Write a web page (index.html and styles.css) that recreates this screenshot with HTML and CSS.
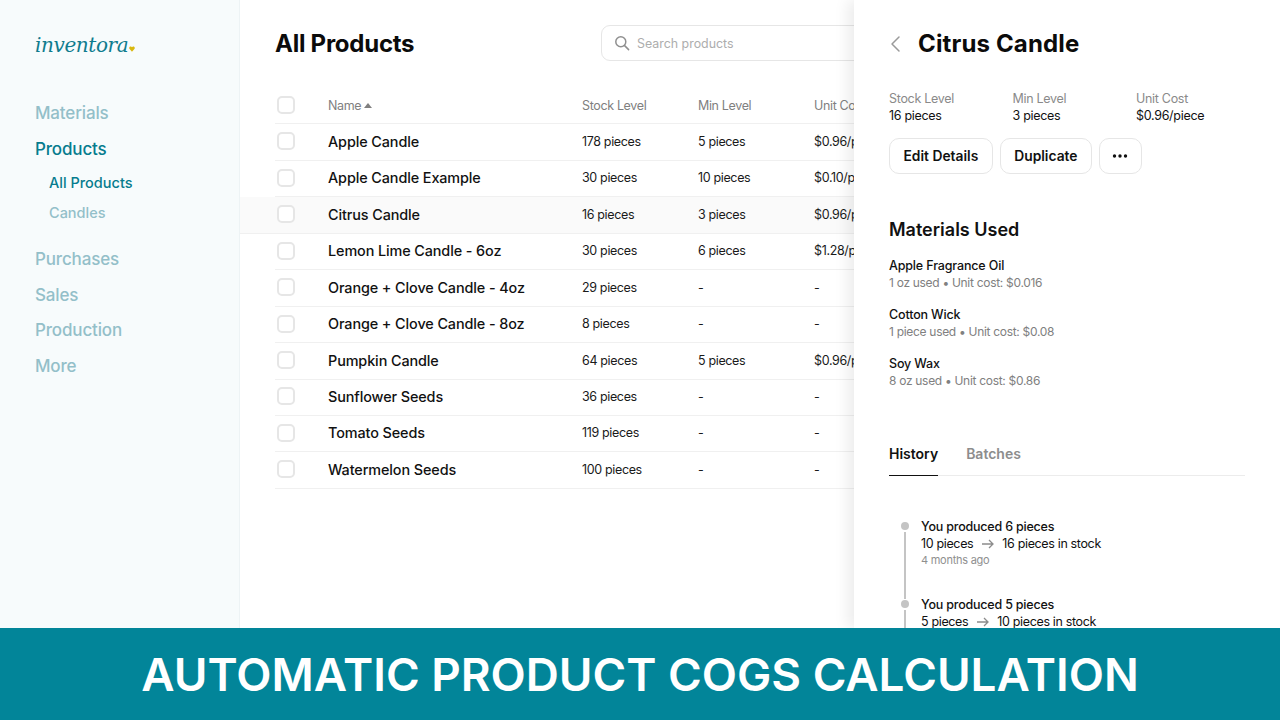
FILE: index.html
```html
<!DOCTYPE html>
<html lang="en">
<head>
<meta charset="utf-8">
<title>Inventora</title>
<link rel="stylesheet" href="styles.css">
</head>
<body>
<div class="app">
  <div class="workspace">
    <aside class="sidebar">
      <div class="logo"><span class="logo-text">inventora</span><svg class="logo-heart" viewBox="0 0 10 10" width="6" height="6"><path d="M5 9.500 1 5C-.5 3 .7.7 2.800.7 3.900.7 4.600 1.300 5 2c.4-.7 1.100-1.300 2.200-1.300C9.300.7 10.500 3 9 5Z" fill="#d9b80f"/></svg></div>
      <nav class="nav">
        <a class="nav-item">Materials</a>
        <a class="nav-item active">Products</a>
        <div class="subnav">
          <a class="sub-item active">All Products</a>
          <a class="sub-item">Candles</a>
        </div>
        <a class="nav-item">Purchases</a>
        <a class="nav-item">Sales</a>
        <a class="nav-item">Production</a>
        <a class="nav-item">More</a>
      </nav>
    </aside>
    <main class="main">
      <header class="main-head">
        <h1 class="page-title">All Products</h1>
        <div class="search">
          <svg class="search-icon" viewBox="0 0 16 16" width="16" height="16" fill="none" stroke="#8f8f8f" stroke-width="1.500" stroke-linecap="round"><circle cx="6.800" cy="6.800" r="5"/><path d="m10.600 10.600 4 4"/></svg>
          <span class="search-text">Search products</span>
        </div>
      </header>
      <div class="table">
        <div class="row head">
          <span class="check"></span><span class="cell-head">Name<i class="sort"></i></span><span class="cell-head">Stock Level</span><span class="cell-head">Min Level</span><span class="cell-head">Unit Cost</span>
        </div>
        <div class="row"><span class="check"></span><span class="name">Apple Candle</span><span class="cell">178 pieces</span><span class="cell">5 pieces</span><span class="cell">$0.96/piece</span></div>
        <div class="row"><span class="check"></span><span class="name">Apple Candle Example</span><span class="cell">30 pieces</span><span class="cell">10 pieces</span><span class="cell">$0.10/piece</span></div>
        <div class="row selected"><span class="check"></span><span class="name">Citrus Candle</span><span class="cell">16 pieces</span><span class="cell">3 pieces</span><span class="cell">$0.96/piece</span></div>
        <div class="row"><span class="check"></span><span class="name">Lemon Lime Candle - 6oz</span><span class="cell">30 pieces</span><span class="cell">6 pieces</span><span class="cell">$1.28/piece</span></div>
        <div class="row"><span class="check"></span><span class="name">Orange + Clove Candle - 4oz</span><span class="cell">29 pieces</span><span class="cell">-</span><span class="cell">-</span></div>
        <div class="row"><span class="check"></span><span class="name">Orange + Clove Candle - 8oz</span><span class="cell">8 pieces</span><span class="cell">-</span><span class="cell">-</span></div>
        <div class="row"><span class="check"></span><span class="name">Pumpkin Candle</span><span class="cell">64 pieces</span><span class="cell">5 pieces</span><span class="cell">$0.96/piece</span></div>
        <div class="row"><span class="check"></span><span class="name">Sunflower Seeds</span><span class="cell">36 pieces</span><span class="cell">-</span><span class="cell">-</span></div>
        <div class="row"><span class="check"></span><span class="name">Tomato Seeds</span><span class="cell">119 pieces</span><span class="cell">-</span><span class="cell">-</span></div>
        <div class="row"><span class="check"></span><span class="name">Watermelon Seeds</span><span class="cell">100 pieces</span><span class="cell">-</span><span class="cell">-</span></div>
      </div>
    </main>
    <section class="panel">
      <div class="panel-head">
        <svg class="back" viewBox="0 0 12 18" width="12" height="18" fill="none" stroke="#9a9a9a" stroke-width="1.500" stroke-linecap="round" stroke-linejoin="round"><path d="M10 2 3 9l7 7"/></svg>
        <h2 class="panel-title">Citrus Candle</h2>
      </div>
      <div class="stats">
        <div class="stat"><span class="stat-label">Stock Level</span><span class="stat-value">16 pieces</span></div>
        <div class="stat"><span class="stat-label">Min Level</span><span class="stat-value">3 pieces</span></div>
        <div class="stat"><span class="stat-label">Unit Cost</span><span class="stat-value">$0.96/piece</span></div>
      </div>
      <div class="actions">
        <button class="btn">Edit Details</button>
        <button class="btn">Duplicate</button>
        <button class="btn more"><svg viewBox="0 0 16 4" width="16" height="4" fill="#111"><circle cx="2.500" cy="2" r="1.700"/><circle cx="8" cy="2" r="1.700"/><circle cx="13.500" cy="2" r="1.700"/></svg></button>
      </div>
      <h3 class="section-title">Materials Used</h3>
      <div class="materials">
        <div class="material"><span class="material-name">Apple Fragrance Oil</span><span class="material-meta">1 oz used • Unit cost: $0.016</span></div>
        <div class="material"><span class="material-name">Cotton Wick</span><span class="material-meta">1 piece used • Unit cost: $0.08</span></div>
        <div class="material"><span class="material-name">Soy Wax</span><span class="material-meta">8 oz used • Unit cost: $0.86</span></div>
      </div>
      <div class="tabs">
        <span class="tab active">History</span>
        <span class="tab">Batches</span>
      </div>
      <div class="timeline">
        <div class="event">
          <span class="event-title">You produced 6 pieces</span>
          <span class="event-line"><span>10 pieces</span><svg class="arrow" viewBox="0 0 12 10" width="12" height="10" fill="none" stroke="#8c8c8c" stroke-width="1.300"><path d="M0 5h11M7 1l4 4-4 4"/></svg><span>16 pieces in stock</span></span>
          <span class="event-time">4 months ago</span>
        </div>
        <div class="event">
          <span class="event-title">You produced 5 pieces</span>
          <span class="event-line"><span>5 pieces</span><svg class="arrow" viewBox="0 0 12 10" width="12" height="10" fill="none" stroke="#8c8c8c" stroke-width="1.300"><path d="M0 5h11M7 1l4 4-4 4"/></svg><span>10 pieces in stock</span></span>
        </div>
      </div>
    </section>
  </div>
  <footer class="banner">AUTOMATIC PRODUCT COGS CALCULATION</footer>
</div>
</body>
</html>
```
FILE: styles.css
```css
* { box-sizing: border-box; }
html, body { margin: 0; padding: 0; }
body { font-family: "Inter", "Noto Sans", sans-serif; color: #111; background: #fff; }
h1, h2, h3 { margin: 0; }
.app { width: 1280px; height: 720px; display: flex; flex-direction: column; overflow: hidden; }
.workspace { position: relative; height: 628px; display: flex; overflow: hidden; }

.sidebar { width: 240px; flex: none; background: #f7fbfc; border-right: 1px solid #edf3f5; padding: 30px 0 0 35px; }
.logo { height: 28px; display: flex; align-items: flex-end; color: #0f7c8e; }
.logo-text { font-family: "DejaVu Serif", serif; font-style: italic; font-size: 20px; line-height: 26px; letter-spacing: -0.4px; }
.logo-heart { margin: 0 0 6px 1px; }
.nav { display: flex; flex-direction: column; margin-top: 43px; }
.nav-item { font-size: 17px; line-height: 24px; font-weight: 500; color: #93bfc9; margin-bottom: 11.600px; letter-spacing: -0.15px; }
.nav-item.active { color: #067c8e; }
.subnav { display: flex; flex-direction: column; padding-left: 14px; margin-top: 1px; margin-bottom: 24px; gap: 10px; }
.sub-item { font-size: 14.500px; line-height: 20px; font-weight: 500; color: #93bfc9; }
.sub-item.active { color: #067c8e; }

.main { flex: 1; padding-left: 35px; min-width: 0; }
.main-head { height: 88px; display: flex; align-items: flex-start; }
.page-title { font-size: 24px; font-weight: 700; line-height: 30px; margin-top: 29px; width: 326px; color: #0b0b0b; letter-spacing: -0.25px; }
.search { margin-top: 25px; width: 400px; height: 36px; border: 1px solid #e6e6e6; border-radius: 9px; display: flex; align-items: center; padding: 1px 0 0 12px; flex: none; }
.search-icon { flex: none; margin-top: -1px; }
.search-text { margin-left: 7px; font-size: 12.400px; color: #adadad; }

.table { width: 800px; }
.row { display: grid; grid-template-columns: 53px 254px 116px 116px 1fr; align-items: center; height: 36.450px; padding-bottom: 1.500px; border-bottom: 1px solid #f0f0f0; }
.row.head { padding-bottom: 0.500px; }
.row.selected { background: #fafafa; margin-left: -35px; padding-left: 35px; }
.check { width: 18px; height: 18px; margin-left: 2px; border: 2px solid #e6e6e6; border-radius: 5px; background: #fff; }
.cell-head { font-size: 12.500px; color: #808080; display: flex; align-items: center; letter-spacing: -0.35px; }
.sort { width: 0; height: 0; margin-left: 3px; border: 4.500px solid transparent; border-top: 0; border-bottom: 5px solid #808080; }
.name { font-size: 14.400px; font-weight: 500; color: #111; white-space: nowrap; letter-spacing: -0.1px; }
.cell { font-size: 12.500px; color: #1a1a1a; white-space: nowrap; letter-spacing: -0.35px; }

.panel { position: absolute; top: 0; right: 0; bottom: 0; width: 426px; background: #fff; box-shadow: -6px 0 14px rgba(0,0,0,.08); padding: 29px 35px 0; overflow: hidden; }
.panel-head { display: flex; align-items: center; height: 30px; }
.back { flex: none; }
.panel-title { margin-left: 17px; font-size: 24px; line-height: 30px; font-weight: 700; color: #0b0b0b; letter-spacing: 0.15px; }
.stats { display: grid; grid-template-columns: repeat(3, 123.500px); margin-top: 31px; }
.stat { display: flex; flex-direction: column; }
.stat-label { font-size: 12.500px; line-height: 17px; color: #8a8a8a; letter-spacing: -0.3px; }
.stat-value { font-size: 12.500px; line-height: 17px; color: #111; letter-spacing: -0.3px; }
.actions { display: flex; gap: 7px; margin-top: 14px; }
.btn { height: 36px; padding: 0 13.500px 1px; border: 1px solid #e6e6e6; border-radius: 10px; background: #fff; font: 600 13.800px "Inter", sans-serif; color: #111; display: flex; align-items: center; }
.btn.more { width: 43px; justify-content: center; padding: 0; }
.section-title { margin-top: 44px; font-size: 18px; line-height: 24px; font-weight: 600; color: #111; }
.materials { display: flex; flex-direction: column; gap: 14.800px; margin-top: 15px; }
.material { display: flex; flex-direction: column; }
.material-name { font-size: 12.500px; line-height: 17px; font-weight: 500; color: #111; letter-spacing: -0.15px; }
.material-meta { font-size: 12px; line-height: 17px; color: #808080; letter-spacing: -0.3px; }
.tabs { display: flex; gap: 28px; margin-top: 55.500px; border-bottom: 1px solid #ececec; width: 356px; }
.tab { font-size: 14px; line-height: 20px; font-weight: 600; color: #8d8d8d; padding-bottom: 11px; margin-bottom: -1px; }
.tab.active { color: #111; border-bottom: 1.500px solid #111; }
.timeline { margin-top: 42px; padding-left: 32px; }
.event { position: relative; display: flex; flex-direction: column; height: 78px; }
.event::before { content: ""; position: absolute; left: -20px; top: 4px; width: 8px; height: 8px; border-radius: 50%; background: #c4c4c4; }
.event::after { content: ""; position: absolute; left: -16.800px; top: 14px; width: 2px; bottom: -3px; background: #c4c4c4; }
.event-title { font-size: 12.500px; line-height: 17px; font-weight: 500; color: #111; letter-spacing: -0.2px; }
.event-line { font-size: 12.500px; line-height: 17px; color: #111; display: flex; align-items: center; gap: 8.500px; white-space: nowrap; letter-spacing: -0.35px; }
.event-time { font-size: 11px; line-height: 16px; color: #8f8f8f; letter-spacing: -0.25px; }

.banner { height: 92px; flex: none; background: #028599; color: #fff; font-size: 45.800px; font-weight: 600; display: flex; align-items: center; justify-content: center; white-space: nowrap; }
```
